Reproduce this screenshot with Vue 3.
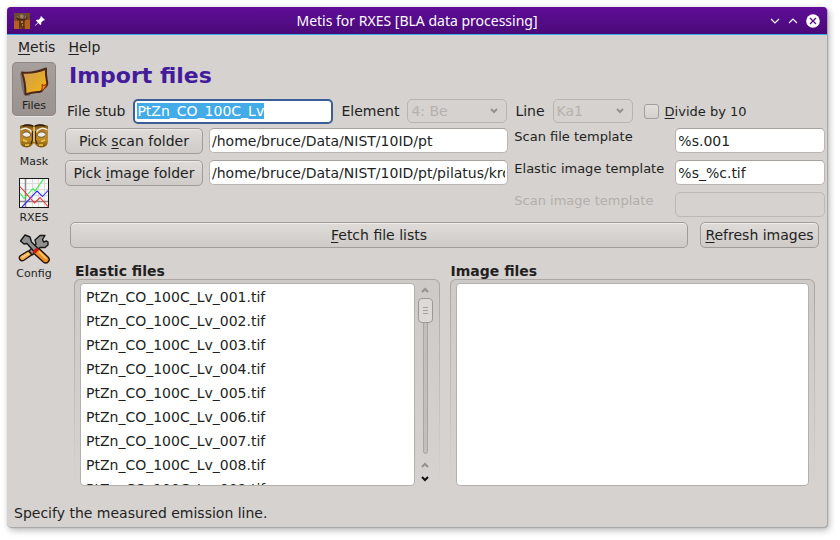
<script setup>
import { ref, onMounted } from 'vue'

const stubInput = ref(null)
const stub = ref('PtZn_CO_100C_Lv')
const scanFolder = ref('/home/bruce/Data/NIST/10ID/pt')
const imageFolder = ref('/home/bruce/Data/NIST/10ID/pt/pilatus/krogstad')
const scanTemplate = ref('%s.001')
const elasticTemplate = ref('%s_%c.tif')
const imageTemplate = ref('')
const divide = ref(false)
const elasticFiles = Array.from({ length: 9 }, (_, i) => `PtZn_CO_100C_Lv_00${i + 1}.tif`)

onMounted(() => {
  stubInput.value.focus()
  stubInput.value.select()
})
</script>

<template>
  <div class="window">
    <header class="titlebar">
      <div class="side">
        <svg class="appicon" width="16" height="16" viewBox="0 0 16 16" aria-hidden="true">
          <rect width="16" height="16" fill="#84461e" />
          <path d="M0 8h5v8H0zM11 7h5v9h-5z" fill="#b4601e" />
          <path d="M0 0h16v4l-3 2-2-2H5L2 6 0 4z" fill="#6c4c30" />
          <path d="M3 5l3 2h4l3-3" stroke="#3c281e" stroke-width="2" fill="none" />
          <path d="M6 7h5l-1 4 1 5H8l-1-3-2 3V9z" fill="#5c341c" />
          <path d="M6 2h3v3H7zM3 3l2 2M12 3l-1 3" fill="#a08c78" stroke="#93765c" />
          <path d="M7 8h2v2H7zM8 11h1v2H8z" fill="#b87844" />
        </svg>
        <svg width="10" height="10" viewBox="0 0 10 10" aria-hidden="true">
          <path d="M6 0l4 4-1 .6-.8-.2-2 2 .1 1.8-1 .8-2.100-2.100L0.500 9.800 0 9.300 2.900 6.600.900 4.600l.9-.9 1.800.1 2-2L5.400 1z" fill="#fff" />
        </svg>
      </div>
      <div class="title">Metis for RXES [BLA data processing]</div>
      <div class="side controls">
        <button type="button" aria-label="Minimize">
          <svg width="10" height="6" viewBox="0 0 10 6"><path d="M1 1l4 4 4-4" fill="none" stroke="#fff" stroke-width="1.200" /></svg>
        </button>
        <button type="button" aria-label="Maximize">
          <svg width="10" height="6" viewBox="0 0 10 6"><path d="M1 5l4-4 4 4" fill="none" stroke="#fff" stroke-width="1.200" /></svg>
        </button>
        <button type="button" aria-label="Close">
          <svg width="14" height="14" viewBox="0 0 14 14"><circle cx="7" cy="7" r="6.800" fill="#fff" /><path d="M4 4l6 6M10 4l-6 6" stroke="#540c88" stroke-width="1.300" /></svg>
        </button>
      </div>
    </header>

    <nav class="menubar">
      <button type="button"><u>M</u>etis</button>
      <button type="button"><u>H</u>elp</button>
    </nav>

    <div class="body">
      <aside class="tools">
        <button type="button" class="tool active">
          <svg width="32" height="32" viewBox="0 0 32 32" aria-hidden="true">
            <defs>
              <linearGradient id="note" x1="0" y1="0" x2="1" y2="1">
                <stop offset="0" stop-color="#cf9c5c" /><stop offset=".5" stop-color="#e0a830" /><stop offset="1" stop-color="#f8b810" />
              </linearGradient>
            </defs>
            <path d="M2 8c1 7 1 14 4 22l6 1-5-23z" fill="#4c4040" opacity=".45" />
            <path d="M4 7.500c8 .8 16-.5 24-4-.6 6 .4 10 1.200 14 .5 3-2 5-3.700 6-1 2-2 3-4 3.500-6-.5-9 .5-14 2.500C7.500 22 6.500 14 4 7.500z" fill="url(#note)" stroke="#4c2818" stroke-width="2" stroke-linejoin="round" />
            <path d="M24 19.500c1 1 3 1 4.500-.5-.5 3-2.500 5.500-5 7 .8-2.500 1-4.500.5-6.500z" fill="#f08c18" stroke="#8a2c10" stroke-width="1" />
          </svg>
          <span>Files</span>
        </button>
        <button type="button" class="tool">
          <svg width="32" height="32" viewBox="0 0 32 32" aria-hidden="true">
            <defs>
              <linearGradient id="gold" x1="0" y1="0" x2="0" y2="1">
                <stop offset="0" stop-color="#6c480c" /><stop offset=".3" stop-color="#b8842c" /><stop offset=".65" stop-color="#c08c24" /><stop offset="1" stop-color="#7c540c" />
              </linearGradient>
            </defs>
            <path d="M2 5c4-2 10-2 14 0 4-2 10-2 14 0v13c0 5-1 7-4 8-3 .8-5 .5-7-1l-3-3-3 3c-2 1.500-4 1.800-7 1-3-1-4-3-4-8z" fill="url(#gold)" />
            <path d="M5 5c3-1.200 7-1.200 10 0M17 5c3-1.200 7-1.200 10 0" fill="none" stroke="#2c1c0c" stroke-width="1.500" />
            <path d="M2.500 9c4-3 9-2 11.500 2.500M29.500 9c-4-3-9-2-11.500 2.500" fill="none" stroke="#f0eadf" stroke-width="1.500" />
            <path d="M4 13.500c2-3.500 7-3.500 9 .5-2 3-7 3-9-.5zM28 13.500c-2-3.500-7-3.500-9 .5 2 3 7 3 9-.5z" fill="#eeeae6" stroke="#5c3c14" stroke-width=".7" />
            <path d="M14.500 10v9l-1.500 4M17.500 10v9l1.500 4" fill="none" stroke="#38240a" stroke-width="1.300" />
            <path d="M16 6v15" stroke="#e8c060" stroke-width="1.700" />
            <path d="M5 19l4 1.500M27 19l-4 1.500M7 24h4M21 24h4" stroke="#f0c858" stroke-width="1.500" fill="none" />
          </svg>
          <span>Mask</span>
        </button>
        <button type="button" class="tool">
          <svg width="32" height="32" viewBox="0 0 32 32" aria-hidden="true">
            <rect x="1.500" y="1.500" width="29" height="29" fill="#f8f8f8" stroke="#181818" />
            <path d="M14.500 2v28M20.500 2v28M26.500 2v28M2 6.500h28M2 12.500h28M2 18.500h28" stroke="#dcdcdc" />
            <path d="M7.500 2v28M2 24.500h28" stroke="#888" stroke-width="1.500" />
            <path d="M2 16l4 5.500 9-10 2 2.500 8.500-12" fill="none" stroke="#30f040" stroke-width="1.100" />
            <path d="M4 30l15-16 5.500 5.500 6-6.500" fill="none" stroke="#3030f4" stroke-width="1.100" />
            <path d="M2 9.500L16.500 26l5.500-5.500 8.500 9.500" fill="none" stroke="#f43030" stroke-width="1.100" />
          </svg>
          <span>RXES</span>
        </button>
        <button type="button" class="tool">
          <svg width="32" height="32" viewBox="0 0 32 32" aria-hidden="true">
            <path d="M10 18L2.500 22.500c-1.500 1-1.500 3-.5 4.200s2.800 1.200 4.300.3L15 21z" fill="#f8a844" stroke="#221408" stroke-width="1.400" />
            <path d="M4 24.500l7-4" stroke="#ffd89c" stroke-width="1.400" />
            <path d="M11 18l7-7-1-4 5-4.500h5L24.500 6.500l1 2.500 3-1 1.500 1v3l-3 2.500h-5L14 22z" fill="#909090" stroke="#181818" stroke-width="1.400" stroke-linejoin="round" />
            <path d="M2.500 8L7 2l5 2 1.500 5 6 6-3.500 3.500L9 10.500 6 11z" fill="#909090" stroke="#181818" stroke-width="1.400" stroke-linejoin="round" />
            <path d="M16 20.500l5-5L30 24c1.500 1.500 1.500 3.500.3 4.800-1.300 1.300-3.500 1.500-5 .2z" fill="#f08c20" stroke="#221408" stroke-width="1.400" />
            <path d="M14.500 18.500l4-4 2.500 2-4.500 4.500z" fill="#d01818" />
            <path d="M21 18.500l7.500 7.500" stroke="#ffc878" stroke-width="1.700" />
          </svg>
          <span>Config</span>
        </button>
      </aside>

      <main class="main">
        <h1>Import files</h1>

        <div class="stubrow">
          <label for="stub">File stub</label>
          <input id="stub" ref="stubInput" v-model="stub" class="field focused" type="text" spellcheck="false" />
          <label for="element">Element</label>
          <div class="combo element">
            <select id="element" disabled><option>4: Be</option></select>
            <svg width="8" height="6" viewBox="0 0 8 6"><path d="M1 1l3 3 3-3" fill="none" stroke="#96918e" stroke-width="2" /></svg>
          </div>
          <label for="line">Line</label>
          <div class="combo line">
            <select id="line" disabled><option>Ka1</option></select>
            <svg width="8" height="6" viewBox="0 0 8 6"><path d="M1 1l3 3 3-3" fill="none" stroke="#96918e" stroke-width="2" /></svg>
          </div>
          <label class="check"><input v-model="divide" type="checkbox" /><span><u>D</u>ivide by 10</span></label>
        </div>

        <div class="paths">
          <button type="button" class="btn">Pick <u>s</u>can folder</button>
          <input v-model="scanFolder" class="field" type="text" aria-label="Scan folder" spellcheck="false" />
          <label for="scan-tpl">Scan file template</label>
          <input id="scan-tpl" v-model="scanTemplate" class="field" type="text" spellcheck="false" />

          <button type="button" class="btn">Pick <u>i</u>mage folder</button>
          <input v-model="imageFolder" class="field" type="text" aria-label="Image folder" spellcheck="false" />
          <label for="elastic-tpl">Elastic image template</label>
          <input id="elastic-tpl" v-model="elasticTemplate" class="field" type="text" spellcheck="false" />

          <label for="image-tpl" class="third off">Scan image template</label>
          <input id="image-tpl" v-model="imageTemplate" class="field" type="text" disabled />
        </div>

        <div class="actions">
          <button type="button" class="btn grow"><u>F</u>etch file lists</button>
          <button type="button" class="btn refresh"><u>R</u>efresh images</button>
        </div>

        <div class="lists">
          <section class="group">
            <h2>Elastic files</h2>
            <div class="frame">
              <ul class="list">
                <li v-for="f in elasticFiles" :key="f">{{ f }}</li>
              </ul>
              <div class="scroll">
                <svg width="8" height="6" viewBox="0 0 8 6"><path d="M1 5l3-3 3 3" fill="none" stroke="#96918e" stroke-width="2" /></svg>
                <div class="track"><div class="thumb"><i></i><i></i><i></i></div></div>
                <div class="steps">
                  <svg width="8" height="6" viewBox="0 0 8 6"><path d="M1 5l3-3 3 3" fill="none" stroke="#96918e" stroke-width="2" /></svg>
                  <svg width="8" height="6" viewBox="0 0 8 6"><path d="M1 1l3 3 3-3" fill="none" stroke="#111" stroke-width="2" /></svg>
                </div>
              </div>
            </div>
          </section>
          <section class="group">
            <h2>Image files</h2>
            <div class="frame"><ul class="list"></ul></div>
          </section>
        </div>
      </main>
    </div>

    <footer class="status">Specify the measured emission line.</footer>
  </div>
</template>

<style>
body {
  margin: 0;
  background: #fff;
}
</style>

<style scoped>
* {
  box-sizing: border-box;
}
.window {
  display: flex;
  flex-direction: column;
  height: calc(100vh - 20px);
  margin: 7px 13px 13px 7px;
  border-radius: 4px;
  overflow: hidden;
  background: #d6d2cf;
  box-shadow: 0 0 1px #b8b8b8, 1px 1px 1px #a4a4a4, 2px 3px 7px rgba(0, 0, 0, 0.3);
  font-family: "DejaVu Sans", sans-serif;
  font-size: 14px;
  color: #221f1e;
}
button,
input,
select {
  font: inherit;
  color: inherit;
  margin: 0;
}
button {
  border: 0;
  background: none;
  padding: 0;
}
.titlebar {
  display: flex;
  align-items: center;
  flex: none;
  height: 28px;
  padding: 0 7px;
  border-bottom: 1px solid #3daee9;
  background: linear-gradient(#5f0d98, #4a0a78);
  color: #fcfcfc;
}
.side {
  display: flex;
  align-items: center;
  gap: 5px;
  width: 60px;
}
.title {
  flex: 1;
  text-align: center;
  font: 14px "Noto Sans", sans-serif;
}
.controls {
  justify-content: flex-end;
  gap: 8px;
}
.controls button {
  display: flex;
}
.menubar {
  display: flex;
  flex: none;
  gap: 13px;
  height: 25px;
  padding: 0 11px 2px;
  align-items: center;
}
u {
  text-decoration: underline;
  text-underline-offset: 2px;
  text-decoration-skip-ink: none;
}
.body {
  display: flex;
  flex: 1;
  min-height: 0;
}
.tools {
  display: flex;
  flex-direction: column;
  gap: 2px;
  width: 58px;
  flex: none;
  padding: 2px 9px 0 5px;
}
.tool {
  display: flex;
  flex-direction: column;
  align-items: center;
  height: 54px;
  padding-top: 3px;
  border-radius: 5px;
  font-size: 11px;
  line-height: 18px;
}
.active {
  background: linear-gradient(#a79f9b, #9a928e);
  box-shadow: inset 0 0 0 1px #8f8783, 0 1px 0 #e8e4e2;
}
.main {
  display: flex;
  flex-direction: column;
  flex: 1;
  min-width: 0;
}
h1 {
  margin: 0 0 6px 4px;
  font-size: 22px;
  line-height: 32px;
  color: #431b9b;
}
.field {
  width: 100%;
  min-width: 0;
  height: 25px;
  padding: 0 2px;
  border: 1px solid #bab6b4;
  border-top-color: #a5a19f;
  border-radius: 5px;
  background: #fff;
  outline: none;
}
.field:disabled {
  background: none;
  border-color: #bcb8b5;
}
.stubrow {
  display: flex;
  align-items: center;
  height: 26px;
  margin-bottom: 4px;
  padding-left: 2px;
}
.stubrow .field {
  width: 200px;
  margin: 0 8px;
}
.stubrow .focused {
  border: 2px solid #3a5f97;
}
.focused::selection {
  background: #43ace8;
  color: #fff;
}
.combo {
  position: relative;
  height: 24px;
  margin: 0 8px;
  border: 1px solid #b8b4b1;
  border-radius: 5px;
}
.combo select {
  width: 100%;
  height: 22px;
  padding: 0 3px;
  border: 0;
  background: none;
  appearance: none;
  color: #b5b1ae;
  opacity: 1;
}
.combo svg {
  position: absolute;
  right: 8px;
  top: 8px;
}
.element {
  width: 100px;
}
.line {
  width: 80px;
}
.check {
  display: flex;
  align-items: center;
  gap: 6px;
  margin-left: 3px;
  font-size: 13px;
}
.check input {
  appearance: none;
  width: 15px;
  height: 15px;
  border: 1px solid #a29e9b;
  border-radius: 3px;
  background: linear-gradient(#e2dfdd, #d4d0cd);
}
.btn {
  height: 26px;
  border: 1px solid #a09c99;
  border-radius: 5px;
  background: linear-gradient(#dedbd8, #cfcbc8);
  box-shadow: inset 0 1px 0 #efedeb;
}
.paths {
  display: grid;
  grid-template-columns: 138px 2fr 155px 1fr;
  grid-auto-rows: 26px;
  gap: 6px;
  padding-right: 2px;
}
.paths label {
  align-self: start;
  font-size: 13px;
  line-height: 18px;
  white-space: nowrap;
}
.third {
  grid-column: 3;
}
.off {
  color: #b3afac;
}
.actions {
  display: flex;
  gap: 12px;
  padding: 4px 8px 0 5px;
}
.grow {
  flex: 1;
}
.refresh {
  width: 119px;
}
.lists {
  display: flex;
  flex: 1;
  gap: 10px;
  min-height: 0;
  padding: 15px 12px 0 9px;
}
.group {
  display: flex;
  flex-direction: column;
  flex: 1;
  min-width: 0;
}
h2 {
  margin: 0 0 0 1px;
  font-size: 14px;
  line-height: 16px;
}
.frame {
  display: flex;
  flex: 1;
  min-height: 0;
  padding: 3px 5px 0;
  border: 1px solid transparent;
  border-bottom: 0;
  border-radius: 6px 6px 0 0;
  background:
    linear-gradient(#cecac7, #d6d2cf) padding-box,
    linear-gradient(#aaa6a3, #d6d2cf) border-box;
}
.list {
  flex: 1;
  min-width: 0;
  margin: 0;
  padding: 1px 5px;
  overflow: hidden;
  list-style: none;
  border: 1px solid #b4b0ad;
  border-radius: 4px;
  background: #fff;
}
.list li {
  height: 24px;
  line-height: 24px;
}
.scroll {
  display: flex;
  flex-direction: column;
  align-items: center;
  gap: 5px;
  width: 19px;
  padding: 4px 0 4px 2px;
}
.steps {
  display: flex;
  flex-direction: column;
  gap: 8px;
  padding-top: 3px;
}
.track {
  flex: 1;
  display: flex;
  justify-content: center;
  width: 5px;
  border: 1px solid #a8a5a3;
  border-radius: 3px;
  background: #c2bfbc;
}
.thumb {
  display: flex;
  flex: none;
  flex-direction: column;
  align-items: center;
  justify-content: center;
  gap: 2px;
  width: 15px;
  height: 25px;
  margin-top: -1px;
  border: 1px solid #9d9996;
  border-radius: 4px;
  background: #dcd9d6;
}
.thumb i {
  width: 5px;
  height: 1px;
  background: #a5a19e;
}
.status {
  flex: none;
  height: 41px;
  padding: 0 7px;
  line-height: 55px;
}
</style>
